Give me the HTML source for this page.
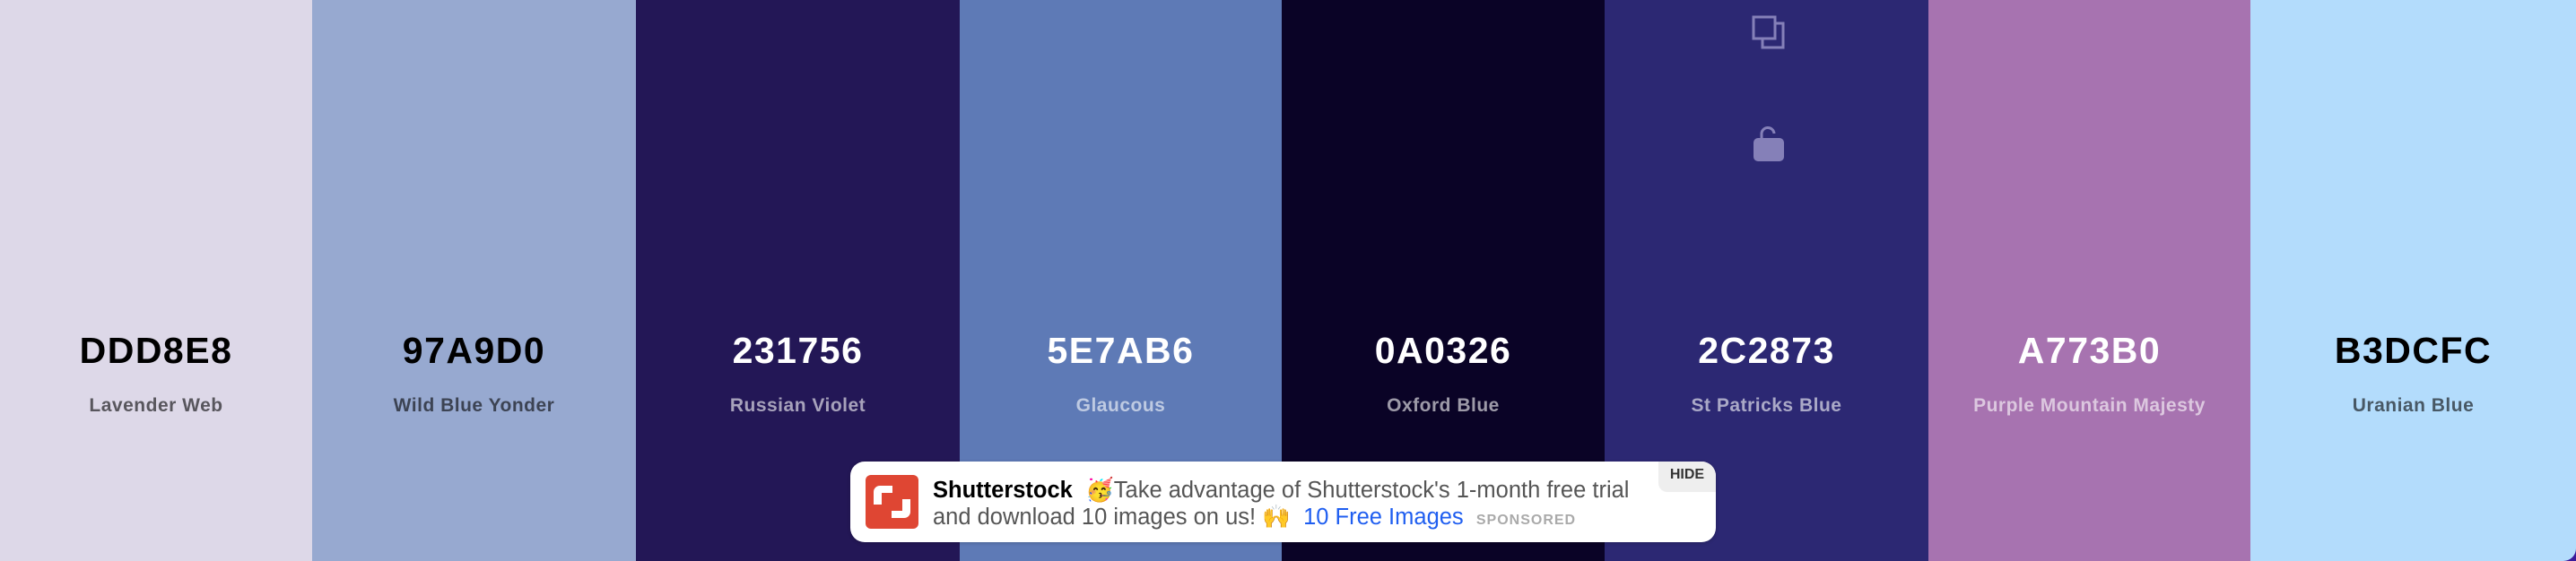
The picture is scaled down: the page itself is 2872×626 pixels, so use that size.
<!DOCTYPE html>
<html><head><meta charset="utf-8"><style>
html,body{margin:0;padding:0;}
body{width:2872px;height:626px;background:#3a1a9a;position:relative;overflow:hidden;font-family:"Liberation Sans",sans-serif;}
.wrap{position:absolute;left:0;top:0;width:2872px;height:626px;display:flex;border-bottom-right-radius:14px;overflow:hidden;}
.c{height:626px;position:relative;}
.hex{position:absolute;left:0;right:0;top:368px;text-align:center;font-size:41px;font-weight:bold;letter-spacing:1.5px;}
.nm{position:absolute;left:0;right:0;top:441px;text-align:center;font-size:21px;font-weight:bold;letter-spacing:0.5px;}
.l .hex{color:#000}.l .nm{color:rgba(0,0,0,.6)}
.d .hex{color:#fff}.d .nm{color:rgba(255,255,255,.6)}
.ad{position:absolute;left:948px;top:515px;width:965px;height:90px;background:#fff;border-radius:16px;box-shadow:0 1px 4px rgba(0,0,0,.2);overflow:hidden;}
.logo{position:absolute;left:17px;top:15px;width:59px;height:60px;background:#df4633;border-radius:6px;}
.t{position:absolute;left:92px;font-size:25.5px;color:#555;white-space:nowrap;}
.hide{position:absolute;right:0;top:0;width:64px;height:34px;background:#eeeeee;border-bottom-left-radius:10px;font-size:16px;font-weight:bold;color:#333;text-align:center;line-height:30px;}
</style></head><body>
<div class="wrap">
<div class="c l" style="width:348px;background:#DDD8E8"><div class="hex">DDD8E8</div><div class="nm">Lavender Web</div></div>
<div class="c l" style="width:361px;background:#97A9D0"><div class="hex">97A9D0</div><div class="nm">Wild Blue Yonder</div></div>
<div class="c d" style="width:361px;background:#231756"><div class="hex">231756</div><div class="nm">Russian Violet</div></div>
<div class="c d" style="width:359px;background:#5E7AB6"><div class="hex">5E7AB6</div><div class="nm">Glaucous</div></div>
<div class="c d" style="width:360px;background:#0A0326"><div class="hex">0A0326</div><div class="nm">Oxford Blue</div></div>
<div class="c d" style="width:361px;background:#2C2873">
<svg style="position:absolute;left:164px;top:17px" width="38" height="38" viewBox="0 0 38 38"><rect x="2" y="2" width="24" height="24" fill="none" stroke="#8580b8" stroke-width="3"/><path d="M26 9H35V36H12V26" fill="none" stroke="#8580b8" stroke-width="3"/></svg>
<svg style="position:absolute;left:165px;top:138px" width="36" height="44" viewBox="0 0 36 44"><path d="M10 16V12a7 7 0 0 1 14 -1" fill="none" stroke="#8580b8" stroke-width="3"/><rect x="1" y="16" width="34" height="26" rx="5" fill="#8580b8"/></svg>
<div class="hex">2C2873</div><div class="nm">St Patricks Blue</div></div>
<div class="c d" style="width:359px;background:#A773B0"><div class="hex">A773B0</div><div class="nm">Purple Mountain Majesty</div></div>
<div class="c l" style="width:363px;background:#B3DCFC"><div class="hex">B3DCFC</div><div class="nm">Uranian Blue</div></div>
</div>
<div class="ad">
<div class="logo"><svg width="59" height="60" viewBox="0 0 59 60"><path d="M9 33V19a7 7 0 0 1 7-7H30V20H18V33Z M50 27V41a7 7 0 0 1-7 7H29V40H41V27Z" fill="#fff"/></svg></div>
<div class="t" style="top:17px"><b style="color:#000">Shutterstock</b>&nbsp; 🥳Take advantage of Shutterstock's 1-month free trial</div>
<div class="t" style="top:47px">and download 10 images on us! 🙌 &nbsp;<span style="color:#1f5ef0">10 Free Images</span> &nbsp;<span style="font-size:16px;font-weight:bold;color:#aaa;letter-spacing:1px">SPONSORED</span></div>
<div class="hide">HIDE</div>
</div>
</body></html>
